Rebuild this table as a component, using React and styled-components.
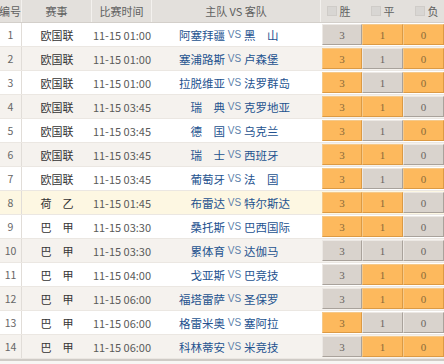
import React from 'react';
import styled, { createGlobalStyle } from 'styled-components';

const GlobalStyle = createGlobalStyle`
  html, body { margin: 0; padding: 0; background: #f7f6f4; }
  body { font-family: "Noto Sans CJK SC", "Liberation Sans", sans-serif; }
`;

// grid columns: 编号 | 赛事 | 时间 | 主队 VS 客队 | 胜 平 负
const COLS = '22px 70px 60px 170px 40px 41px 41px';

const MATCHES = [
  [1, '欧国联', '11-15 01:00', '阿塞拜疆', '黑　山', 'gxx'],
  [2, '欧国联', '11-15 01:00', '塞浦路斯', '卢森堡', 'xgx'],
  [3, '欧国联', '11-15 01:00', '拉脱维亚', '法罗群岛', 'xgx'],
  [4, '欧国联', '11-15 03:45', '瑞　典', '克罗地亚', 'xxg'],
  [5, '欧国联', '11-15 03:45', '德　国', '乌克兰', 'xgx'],
  [6, '欧国联', '11-15 03:45', '瑞　士', '西班牙', 'xxg'],
  [7, '欧国联', '11-15 03:45', '葡萄牙', '法　国', 'xgx'],
  [8, '荷　乙', '11-15 01:45', '布雷达', '特尔斯达', 'xxg'],
  [9, '巴　甲', '11-15 03:30', '桑托斯', '巴西国际', 'xxg'],
  [10, '巴　甲', '11-15 03:30', '累体育', '达伽马', 'ggg'],
  [11, '巴　甲', '11-15 04:00', '戈亚斯', '巴竞技', 'gxx'],
  [12, '巴　甲', '11-15 06:00', '福塔雷萨', '圣保罗', 'gxx'],
  [13, '巴　甲', '11-15 06:00', '格雷米奥', '塞阿拉', 'xgg'],
  [14, '巴　甲', '11-15 06:00', '科林蒂安', '米竞技', 'gxx'],
];

const Table = styled.div`
  width: 444px;
  background: #fff;
  border-bottom: 2px solid #cfcbc6;
  overflow: hidden;
`;

const HeadRow = styled.div`
  display: grid;
  grid-template-columns: 22px 70px 60px 169px 123px;
  height: 23px;
  background: #e3e0dc;
  border-bottom: 1px solid #d3cfca;
  box-sizing: border-box;
`;

const HeadCell = styled.div`
  display: flex;
  align-items: center;
  justify-content: ${p => p.$align || 'center'};
  gap: ${p => p.$gap || 0}px;
  font-size: 11px;
  color: #606060;
  white-space: nowrap;
  border-right: ${p => (p.$last ? 'none' : '1px solid #f3f1ee')};
`;

const Pick = styled.span`
  display: inline-flex;
  align-items: center;
  gap: 3px;
`;

const Box = styled.span`
  width: 8px;
  height: 8px;
  background: #d8d6d3;
  border: 1px solid #cfccc8;
`;

const Row = styled.div`
  display: grid;
  grid-template-columns: ${COLS};
  height: 24px;
  background: ${p => p.$bg};
  border-bottom: 1px solid #ebe7e2;
  box-sizing: border-box;
`;

const Cell = styled.div`
  display: flex;
  align-items: center;
  justify-content: center;
  font-size: ${p => p.$size || 11}px;
  color: ${p => p.$color || '#333'};
  white-space: nowrap;
  border-right: ${p => (p.$line ? '1px solid #e1ddd8' : 'none')};
`;

const Teams = styled.div`
  display: grid;
  grid-template-columns: 73px 19px 1fr;
  align-items: center;
  font-size: 11.5px;
  color: #24528f;
  white-space: nowrap;
`;

const Home = styled.span`
  text-align: right;
`;

const Vs = styled.span`
  text-align: center;
  font-family: "Liberation Sans", sans-serif;
  font-size: 10px;
  color: #5d7fab;
`;

const Odd = styled.div`
  margin: 1px 0;
  display: flex;
  align-items: center;
  justify-content: center;
  font-family: "Liberation Serif", serif;
  font-size: 11px;
  color: ${p => (p.$hot ? '#8a6a3a' : '#6b6560')};
  background: ${p => (p.$hot ? '#fdb95d' : '#d9d3cd')};
  border: 1px solid ${p => (p.$hot ? '#f5c98a' : '#ece8e4')};
  border-right-color: ${p => (p.$hot ? '#dc9a44' : '#a9a29b')};
  border-bottom-color: ${p => (p.$hot ? '#dc9a44' : '#a9a29b')};
`;

function rowBg(n) {
  if (n === 8) return '#fdf7e2';
  return n % 2 === 0 ? '#f5f2ee' : '#ffffff';
}

export default function App() {
  return (
    <>
      <GlobalStyle />
      <Table>
        <HeadRow>
          <HeadCell $align="flex-end">编号</HeadCell>
          <HeadCell>赛事</HeadCell>
          <HeadCell>比赛时间</HeadCell>
          <HeadCell>主队 VS 客队</HeadCell>
          <HeadCell $last $gap={20}>
            <Pick><Box />胜</Pick>
            <Pick><Box />平</Pick>
            <Pick><Box />负</Pick>
          </HeadCell>
        </HeadRow>
        {MATCHES.map(([no, league, time, home, away, picks]) => (
          <Row key={no} $bg={rowBg(no)}>
            <Cell $line $color="#666" $size={10.5}>{no}</Cell>
            <Cell>{league}</Cell>
            <Cell $color="#5a5a5a" $size={11}>{time}</Cell>
            <Teams>
              <Home>{home}</Home>
              <Vs>VS</Vs>
              <span>{away}</span>
            </Teams>
            {['3', '1', '0'].map((v, i) => (
              <Odd key={v} $hot={picks[i] === 'x'}>{v}</Odd>
            ))}
          </Row>
        ))}
      </Table>
    </>
  );
}
